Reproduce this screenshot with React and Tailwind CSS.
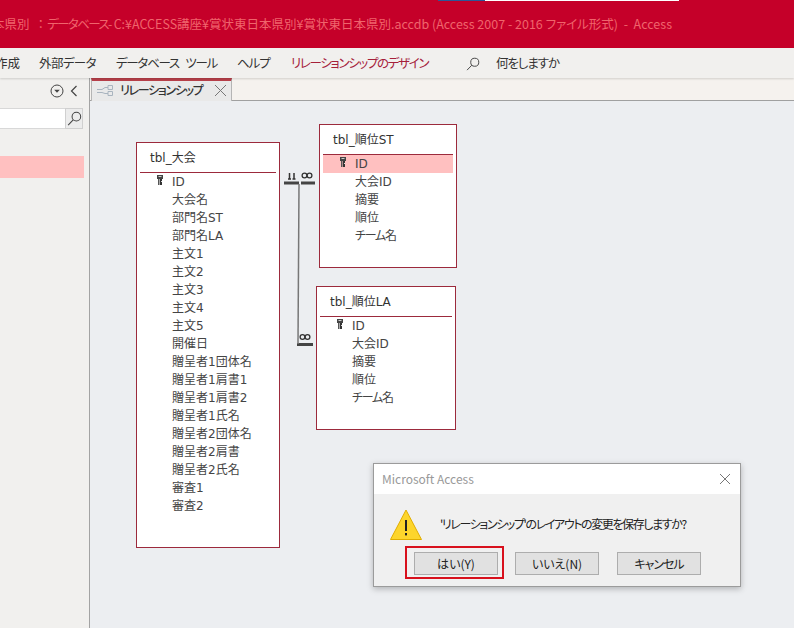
const font = "[font-family:'Noto_Sans_CJK_JP','Noto_Sans_CJK_JP',sans-serif] [font-feature-settings:'palt']";

const Lens = ({ className }) => (
  <svg viewBox="0 0 16 16" className={className} fill="none" stroke="#444" strokeWidth="1.1">
    <circle cx="10" cy="6" r="4.6" />
    <path d="M6.6 9.4 1.2 15" />
  </svg>
);

const KeyIcon = () => (
  <svg viewBox="0 0 6 10" className="w-[6px] h-[10px] -mt-[4px]">
    <rect x="0" y="0" width="6" height="4" fill="#444" />
    <rect x="1.5" y="1" width="3" height="1" fill="#ccc" />
    <rect x="1" y="4" width="1.5" height="6" fill="#555" />
    <rect x="3" y="4" width="2" height="6" fill="#333" />
    <rect x="4" y="6" width="1" height="1" fill="#ddd" />
  </svg>
);

const FieldTable = ({ name, fields, className, selected }) => (
  <div className={`absolute bg-white border border-[#9c2a3c] px-[3px] [font-family:'DejaVu_Sans','Noto_Sans_CJK_JP',sans-serif] ${className}`}>
    <div className="h-[29px] flex items-center pl-[10px] text-[12px] text-[#333]">{name}</div>
    <div className="h-px bg-[#9c2a3c]" />
    <div>
      {fields.map((f, i) => (
        <div key={f} className={`h-[18px] flex items-center text-[12px] text-[#444] ${selected && i === 0 ? 'bg-[#ffc0c0]' : ''}`}>
          <span className="w-[32px] flex justify-end pr-[9px] shrink-0">{i === 0 && <KeyIcon />}</span>
          <span className={`whitespace-nowrap ${f === 'チーム名' ? 'tracking-[-1.2px]' : ''}`}>{f}</span>
        </div>
      ))}
    </div>
  </div>
);

const mainFields = ['ID', '大会名', '部門名ST', '部門名LA', '主文1', '主文2', '主文3', '主文4', '主文5', '開催日', '贈呈者1団体名', '贈呈者1肩書1', '贈呈者1肩書2', '贈呈者1氏名', '贈呈者2団体名', '贈呈者2肩書', '贈呈者2氏名', '審査1', '審査2'];
const rankFields = ['ID', '大会ID', '摘要', '順位', 'チーム名'];

const DialogButton = ({ children, className = '' }) => (
  <button className={`w-[84px] h-[23px] bg-[#e1e1e1] border border-[#adadad] text-[12px] text-[#222] ${className}`}>{children}</button>
);

export default function App() {
  return (
    <div className={`w-[794px] h-[628px] overflow-hidden flex flex-col relative bg-[#eceef1] ${font}`}>
      {/* Title bar */}
      <div className="h-[48px] shrink-0 bg-[#c50029] relative flex items-center justify-end pr-[122px] overflow-hidden">
        <div className="absolute top-0 left-[438px] w-[241px] h-px bg-white">
          <div className="w-[47px] h-px bg-[#2b5797]" />
        </div>
        <span className="whitespace-nowrap text-[12.5px] text-[#f0646c] pt-[1px]">
          賞状東日本県別<span className="ml-[5px] [font-feature-settings:normal]">：</span>
          <span className="tracking-[-1.6px]">データベース-</span> C:¥ACCESS講座¥賞状東日本県別¥賞状東日本県別.accdb (Access 2007 - 2016 ファイル形式)&nbsp; -&nbsp; Access
        </span>
      </div>

      {/* Ribbon tabs */}
      <div className="h-[30px] shrink-0 bg-[#f1f0ee] flex items-center text-[12.5px] text-[#333] pt-[1px] shadow-[0_1px_2px_rgba(0,0,0,0.15)] z-10 whitespace-nowrap">
        <span className="w-[39px] flex justify-end pr-[19px] shrink-0">作成</span>
        <span className="w-[77px] tracking-[-0.6px]">外部データ</span>
        <span className="w-[121px] tracking-[-1.3px] [word-spacing:5px]">データベース ツール</span>
        <span className="w-[54px] tracking-[-1px]">ヘルプ</span>
        <span className="w-[175px] text-[#a5203a] tracking-[-1.35px]">リレーションシップのデザイン</span>
        <Lens className="w-[14px] h-[14px]" />
        <span className="ml-[16px] tracking-[-1.1px]">何をしますか</span>
      </div>

      <div className="flex-1 flex min-h-0">
        {/* Navigation pane */}
        <div className="w-[90px] shrink-0 bg-[#f1f0ee] border-r border-[#a3a3a3]">
          <div className="h-[26px] mb-[4px] flex items-center justify-end gap-[6px] pr-[11px]">
            <svg viewBox="0 0 14 14" className="w-[14px] h-[14px]" fill="none" stroke="#444">
              <circle cx="7" cy="7" r="6" />
              <path d="M4.2 5.8h5.6L7 8.8z" fill="#444" stroke="none" />
            </svg>
            <svg viewBox="0 0 8 12" className="w-[8px] h-[12px]" fill="none" stroke="#444" strokeWidth="1.2">
              <path d="M6.5 1 1.5 6l5 5" />
            </svg>
          </div>
          <div className="h-[21px] flex mr-[6px]">
            <div className="flex-1 bg-white border-y border-[#d8d8d8]" />
            <div className="w-[18px] bg-[#ececec] border border-[#d0d0d0] flex items-center justify-center">
              <Lens className="w-[15px] h-[15px]" />
            </div>
          </div>
          <div className="h-[22px] mt-[27px] mr-[5px] bg-[#ffc0c0]" />
        </div>

        {/* Document area */}
        <div className="flex-1 min-w-0 flex flex-col">
          <div className="h-[23px] shrink-0 bg-[#f5f2ee] border-b border-[#a0a0a0] pl-px">
            <div className="w-[141px] h-[23px] bg-[#e9e9e9] border-t-[3px] border-[#b8404a] border-r border-r-[#b5b5b5] border-l border-l-[#b5b5b5] flex items-center pl-[5px] pb-[2px] text-[12px] font-medium text-[#333]">
              <svg viewBox="0 0 16 11" className="w-[16px] h-[11px] shrink-0" fill="none" stroke="#a9b4bf">
                <path d="M0 4.5h5l3-2h3M0 7.5h5l3 1h3" />
                <path d="M11 0.5h4.5v4H11zM11 6.5h4.5v4H11z" />
              </svg>
              <span className="ml-[7px] whitespace-nowrap tracking-[-1.3px]">リレーションシップ</span>
              <svg viewBox="0 0 13 13" className="w-[13px] h-[13px] ml-[11px] shrink-0" fill="none" stroke="#777">
                <path d="M1 1l11 11M12 1 1 12" />
              </svg>
            </div>
          </div>
          <div className="flex-1" />
        </div>
      </div>

      {/* Relationship diagram */}
      <FieldTable name="tbl_大会" fields={mainFields} className="left-[136px] top-[142px] w-[144px] h-[406px]" />
      <FieldTable name="tbl_順位ST" fields={rankFields} selected className="left-[319px] top-[124px] w-[138px] h-[144px]" />
      <FieldTable name="tbl_順位LA" fields={rankFields} className="left-[316px] top-[286px] w-[140px] h-[144px]" />

      <svg viewBox="0 0 40 180" className="absolute left-[280px] top-[170px] w-[40px] h-[180px]" fill="none">
        <path d="M4 13h15M21 13h14M17 174.5h16" stroke="#444" strokeWidth="3" />
        <path d="M19 14 18 174" stroke="#777" strokeWidth="1.5" />
        <path d="M9.5 3v6M14 3v6M8 9h3M12.5 9h3" stroke="#333" strokeWidth="1.5" />
        <circle cx="24.5" cy="5.5" r="2.4" stroke="#333" strokeWidth="1.3" />
        <circle cx="29.5" cy="5.5" r="2.4" stroke="#333" strokeWidth="1.3" />
        <circle cx="22.5" cy="167" r="2.4" stroke="#333" strokeWidth="1.3" />
        <circle cx="27.5" cy="167" r="2.4" stroke="#333" strokeWidth="1.3" />
      </svg>

      {/* Save dialog */}
      <div className="absolute left-[373px] top-[463px] w-[368px] h-[124px] bg-[#f0f0f0] border border-[#9b9b9b] shadow-[0_2px_6px_rgba(0,0,0,0.25)] flex flex-col">
        <div className="h-[30px] shrink-0 bg-white flex items-center justify-between pl-[8px] pr-[9px] text-[12px] text-[#999]">
          <span>Microsoft Access</span>
          <svg viewBox="0 0 12 12" className="w-[12px] h-[12px]" fill="none" stroke="#777">
            <path d="M1 1l10 10M11 1 1 11" />
          </svg>
        </div>
        <div className="flex items-center h-[52px] pl-[16px] pt-[8px]">
          <svg viewBox="0 0 32 31" className="w-[32px] h-[31px] shrink-0">
            <path d="M16 1 31.5 30.5H.5z" fill="#fdd52b" stroke="#e0ad00" strokeLinejoin="round" />
            <rect x="15" y="11" width="2" height="11" fill="#222" />
            <rect x="15" y="24" width="2" height="2.4" fill="#222" />
          </svg>
          <span className="ml-[18px] text-[12px] text-[#222] whitespace-nowrap tracking-[-1.4px]">'リレーションシップ'のレイアウトの変更を保存しますか?</span>
        </div>
        <div className="flex pl-[40px] pt-[6px]">
          <DialogButton>はい(Y)</DialogButton>
          <DialogButton className="ml-[17px]">いいえ(N)</DialogButton>
          <DialogButton className="ml-[18px] tracking-[-1px]">キャンセル</DialogButton>
        </div>
        {/* red annotation round the default button */}
        <div className="absolute left-[31px] top-[82px] w-[99px] h-[33px] border-2 border-[#d8101c]" />
      </div>
    </div>
  );
}
